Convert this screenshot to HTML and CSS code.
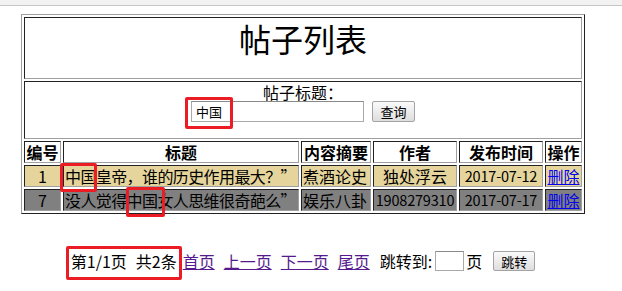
FILE: index.html
```html
<!DOCTYPE html>
<html lang="zh-CN">
<head>
    <meta charset="UTF-8">
    <title>帖子列表</title>
    <link rel="stylesheet" href="styles.css">
</head>
<body>
    <div class="topbar"></div>
    <div class="page">
        <table class="list">
            <colgroup>
                <col class="c-id">
                <col class="c-title">
                <col class="c-summary">
                <col class="c-author">
                <col class="c-time">
                <col class="c-op">
            </colgroup>
            <tr>
                <td colspan="6" class="title">帖子列表</td>
            </tr>
            <tr>
                <td colspan="6" class="search">
                    <div class="search-label">帖子标题：</div>
                    <div class="search-form">
                        <input type="text" class="search-input" value="中国">
                        <button class="btn btn-query">查询</button>
                    </div>
                </td>
            </tr>
            <tr class="head">
                <th>编号</th>
                <th>标题</th>
                <th>内容摘要</th>
                <th>作者</th>
                <th>发布时间</th>
                <th>操作</th>
            </tr>
            <tr class="row-odd">
                <td class="center">1</td>
                <td class="nowrap post-title">中国皇帝，谁的历史作用最大？”</td>
                <td class="nowrap">煮酒论史</td>
                <td class="center">独处浮云</td>
                <td class="center num">2017-07-12</td>
                <td class="center"><a href="#">删除</a></td>
            </tr>
            <tr class="row-even">
                <td class="center">7</td>
                <td class="nowrap post-title">没人觉得中国女人思维很奇葩么”</td>
                <td class="nowrap">娱乐八卦</td>
                <td class="center num">1908279310</td>
                <td class="center num">2017-07-17</td>
                <td class="center"><a href="#">删除</a></td>
            </tr>
        </table>

        <div class="pager">
            <span>第1/1页</span>
            <span class="gap-s">共2条</span>
            <a href="#" class="gap-xs">首页</a>
            <a href="#" class="gap-m">上一页</a>
            <a href="#" class="gap-m">下一页</a>
            <a href="#" class="gap-m">尾页</a>
            <span class="gap-l">跳转到:</span>
            <input type="text" class="jump-input">
            <span class="gap-xxs">页</span>
            <button class="btn btn-jump">跳转</button>
        </div>

        <!-- red annotation boxes drawn over the screenshot -->
        <span class="mark mark-input"></span>
        <span class="mark mark-row1"></span>
        <span class="mark mark-row2"></span>
        <span class="mark mark-pager"></span>
    </div>
</body>
</html>
```

FILE: styles.css
```css
body {
    margin: 0;
    font-family: "Noto Sans CJK SC", "Noto Sans", sans-serif;
    font-size: 16px;
    color: #000;
    background-color: #fff;
}
.topbar {
    height: 5px;
    background-color: #f2f2f2;
    border-bottom: 1px solid #c6c6c6;
}
.page {
    position: relative;
    height: 285px;
    padding: 8px 0 0 21px;
    box-sizing: border-box;
}
.list {
    width: 564px;
    table-layout: fixed;
    border-collapse: separate;
    border-spacing: 2px;
    border: 1px solid;
    border-color: #a0a0a0 #222 #222 #a0a0a0;
}
.list td, .list th {
    border: 1px solid;
    border-color: #222 #a0a0a0 #a0a0a0 #222;
    padding: 1px;
    line-height: 18px;
}
.c-id { width: 37px; }
.c-title { width: 236px; }
.c-summary { width: 70px; }
.c-author { width: 84px; }
.c-time { width: 84px; }
.c-op { width: 37px; }
.title {
    font-size: 32px;
    line-height: 36px !important;
    text-align: center;
    padding: 2px 1px 22px !important;
}
.search {
    text-align: center;
    padding: 1px 1px 16px !important;
}
.search-label {
    height: 18px;
    line-height: 18px;
}
.search-form {
    display: flex;
    justify-content: center;
    align-items: center;
    height: 21px;
}
.search-input {
    width: 173px;
    height: 21px;
    box-sizing: border-box;
    margin: 0;
    padding: 0 4px;
    border: 1px solid #a9a9a9;
    border-top-color: #8a8a8a;
    font-family: "Noto Sans CJK SC", sans-serif;
    font-size: 13px;
    outline: none;
}
.btn {
    margin: 0;
    padding: 0;
    box-sizing: border-box;
    border: 1px solid #a3a3a3;
    border-radius: 2px;
    background: linear-gradient(#fafafa, #dedede);
    font-family: "Noto Sans CJK SC", sans-serif;
    font-size: 13px;
    line-height: 1;
    color: #000;
}
.btn-query {
    width: 43px;
    height: 21px;
    margin-left: 8px;
}
.head th {
    background-color: #fff;
    font-weight: bold;
    white-space: nowrap;
}
.row-odd td {
    background-color: #e5d49c;
}
.row-even td {
    background-color: #808080;
}
.center {
    text-align: center;
    white-space: nowrap;
}
.nowrap {
    white-space: nowrap;
    overflow: hidden;
}
.post-title {
    letter-spacing: -0.6px;
}
.num {
    font-size: 14.5px;
    letter-spacing: -0.2px;
}
.list a {
    color: #0000ee;
}
.pager {
    width: 564px;
    margin-top: 36px;
    display: flex;
    justify-content: center;
    align-items: center;
    height: 22px;
    line-height: 22px;
    white-space: nowrap;
}
.pager a {
    color: #551a8b;
}
.gap-xxs { margin-left: 2px; }
.gap-xs { margin-left: 6px; }
.gap-s { margin-left: 9px; }
.gap-m { margin-left: 9px; }
.gap-l { margin-left: 10px; }
.jump-input {
    width: 29px;
    height: 20px;
    box-sizing: border-box;
    margin: 0 0 0 3px;
    border: 1px solid #a9a9a9;
    border-top-color: #8a8a8a;
    padding: 0;
    outline: none;
}
.btn-jump {
    width: 42px;
    height: 20px;
    margin-left: 11px;
}
.mark {
    position: absolute;
    border: 3px solid #ec1c24;
    border-radius: 2px;
    box-sizing: border-box;
}
.mark-input { left: 185px; top: 91px; width: 48px; height: 32px; }
.mark-row1 { left: 60px; top: 157px; width: 37px; height: 29px; }
.mark-row2 { left: 126px; top: 181px; width: 39px; height: 30px; }
.mark-pager { left: 66px; top: 240px; width: 116px; height: 34px; }
```
